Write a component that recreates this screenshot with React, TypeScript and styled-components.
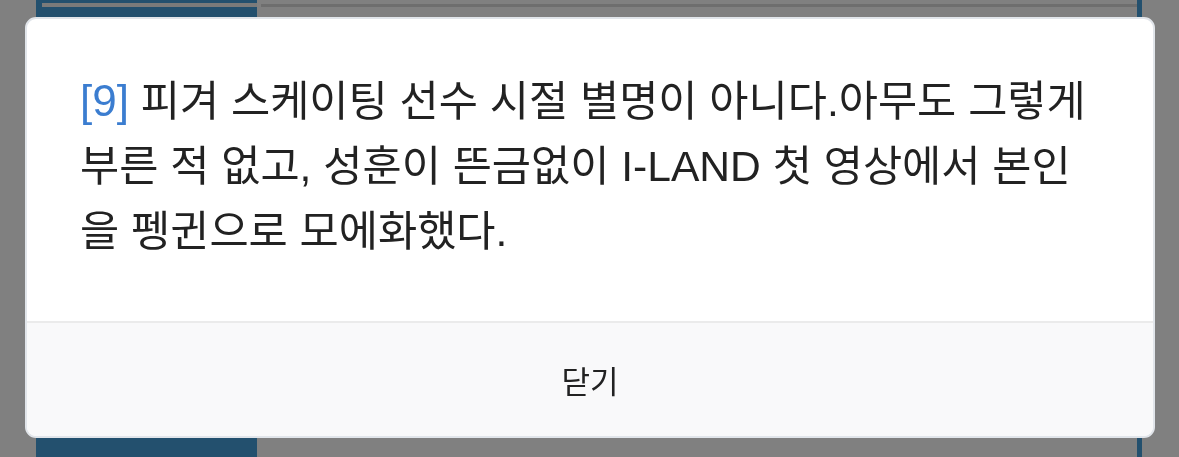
import styled, { createGlobalStyle } from 'styled-components';

const GlobalStyle = createGlobalStyle`
  html, body {
    margin: 0;
    padding: 0;
    height: 100%;
  }
  body {
    background: #808080;
    font-family: 'Liberation Sans', 'Noto Sans CJK KR', sans-serif;
    overflow: hidden;
  }
`;

const Page = styled.div`
  display: flex;
  height: 457px;
  padding-left: 36px;
`;

const Sidebar = styled.div`
  width: 221px;
  background: #23506e;
  padding-top: 3px;
  padding-left: 6px;
  box-sizing: border-box;
`;

const SidebarBar = styled.div`
  height: 4px;
  background: #7a7a7a;
`;

const Main = styled.div`
  width: 880px;
  padding-top: 4px;
  padding-left: 4px;
  box-sizing: border-box;
`;

const MainBar = styled.div`
  height: 3px;
  background: #6e6e6e;
`;

const Edge = styled.div`
  width: 5px;
  background: #23506e;
`;

const Overlay = styled.div`
  position: fixed;
  inset: 0;
  padding: 17px 24px 19px 25px;
`;

const Modal = styled.div`
  display: flex;
  flex-direction: column;
  height: 421px;
  box-sizing: border-box;
  background: #fff;
  border: 2px solid #e1e5ea;
  border-radius: 11px;
  overflow: hidden;
`;

const Body = styled.div`
  padding: 49px 54px 57px 53px;
  border-bottom: 2px solid #ebebeb;
`;

const Message = styled.p`
  margin: 0;
  font-size: 42.6px;
  line-height: 65px;
  color: #222;
`;

const Ref = styled.span`
  color: #3b7dd0;
  font-size: 44px;
`;

const Footer = styled.div`
  flex: 1;
  display: flex;
  align-items: center;
  justify-content: center;
  background: #f9f9fa;
`;

const CloseButton = styled.button`
  border: 0;
  background: none;
  padding: 0;
  font-family: 'Noto Sans CJK KR', sans-serif;
  font-size: 31px;
  color: #222;
  cursor: pointer;
`;

function App() {
  return (
    <>
      <GlobalStyle />
      <Page>
        <Sidebar>
          <SidebarBar />
        </Sidebar>
        <Main>
          <MainBar />
        </Main>
        <Edge />
      </Page>
      <Overlay>
        <Modal>
          <Body>
            <Message>
              <Ref>[9]</Ref> 피겨 스케이팅 선수 시절 별명이 아니다.아무도 그렇게 부른 적 없고, 성훈이
              뜬금없이 I-LAND 첫 영상에서 본인을 펭귄으로 모에화했다.
            </Message>
          </Body>
          <Footer>
            <CloseButton>닫기</CloseButton>
          </Footer>
        </Modal>
      </Overlay>
    </>
  );
}

export default App;
